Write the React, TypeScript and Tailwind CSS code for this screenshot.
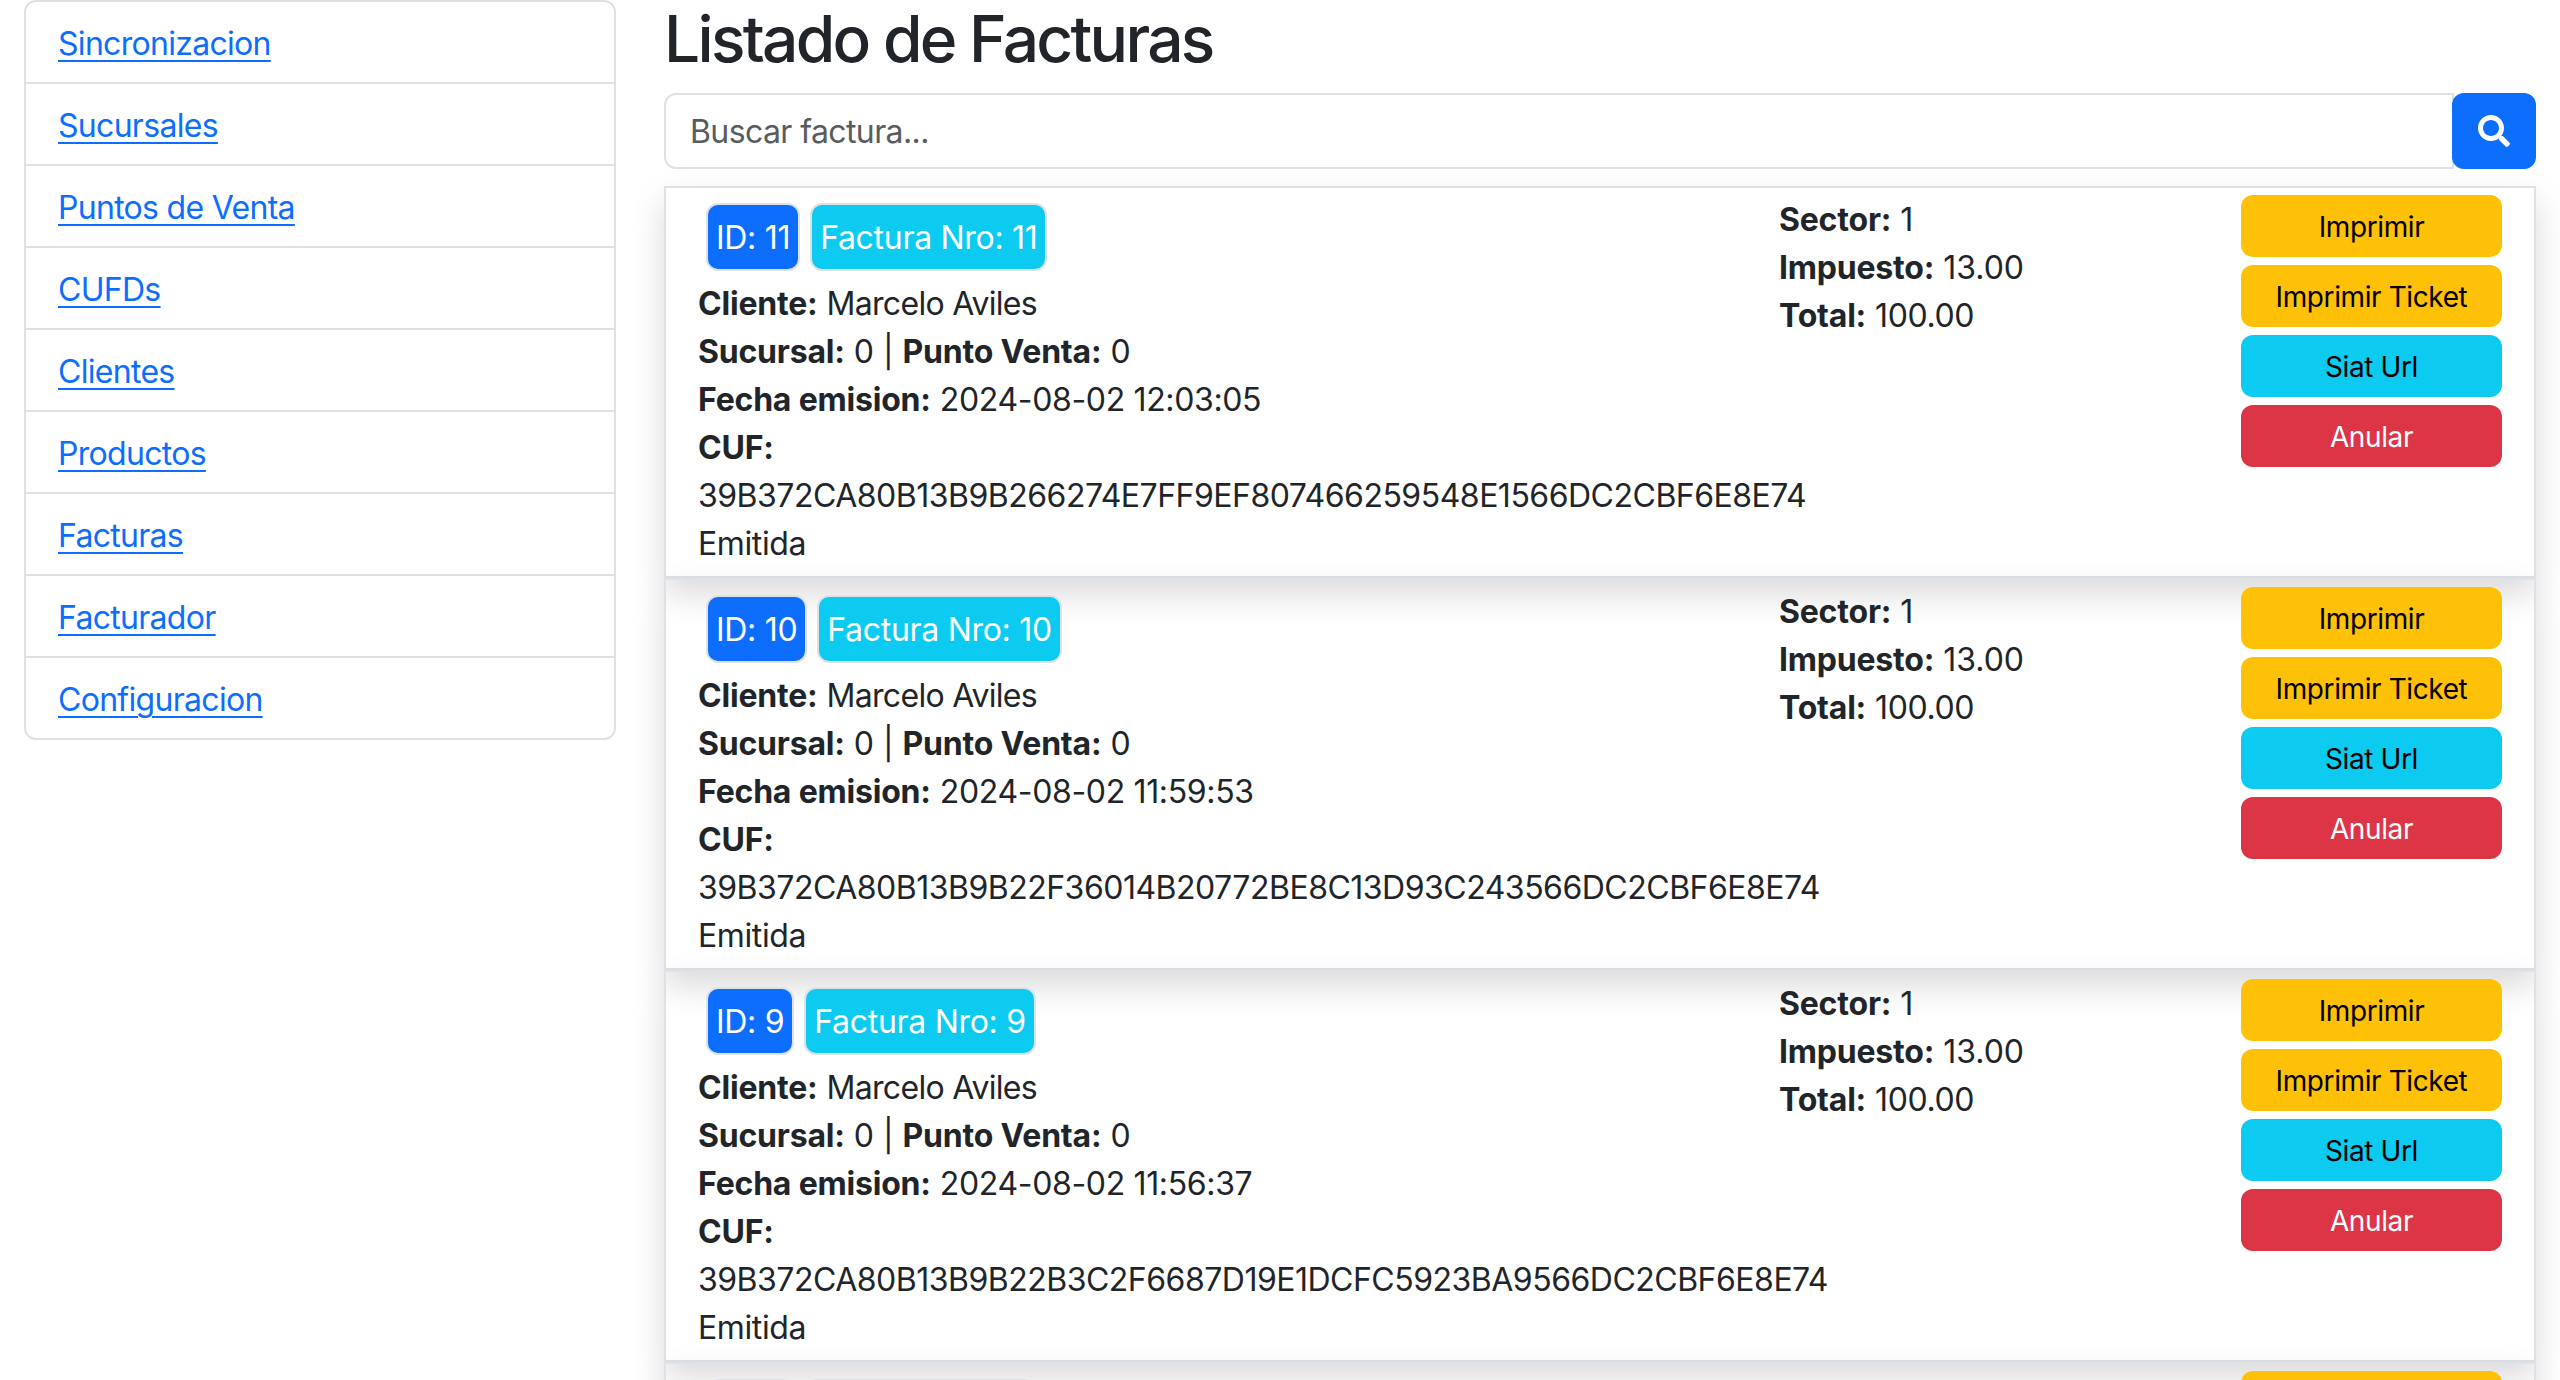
import { FaSearch } from "react-icons/fa"

const links = [
  "Sincronizacion",
  "Sucursales",
  "Puntos de Venta",
  "CUFDs",
  "Clientes",
  "Productos",
  "Facturas",
  "Facturador",
  "Configuracion",
]

const facturas = [
  { id: 11, fecha: "2024-08-02 12:03:05", cuf: "39B372CA80B13B9B266274E7FF9EF807466259548E1566DC2CBF6E8E74" },
  { id: 10, fecha: "2024-08-02 11:59:53", cuf: "39B372CA80B13B9B22F36014B20772BE8C13D93C243566DC2CBF6E8E74" },
  { id: 9, fecha: "2024-08-02 11:56:37", cuf: "39B372CA80B13B9B22B3C2F6687D19E1DCFC5923BA9566DC2CBF6E8E74" },
  { id: 8, fecha: "2024-08-02 11:50:12", cuf: "39B372CA80B13B9B22B3C2F6687D19E1DCFC5923BA9566DC2CBF6E8E74" },
]

function Label({ text }: { text: string }) {
  return <b className="font-bold tracking-[-0.2px]">{text}</b>
}

function Badge({ text, className }: { text: string; className: string }) {
  return (
    <span className={`inline-block rounded-xl border-2 border-[#dee2e6] px-2 pt-[9px] pb-[7px] tracking-[-0.3px] text-white ${className}`}>
      {text}
    </span>
  )
}

function ActionButton({ text, className }: { text: string; className: string }) {
  return (
    <button className={`h-[62px] w-full rounded-xl pt-[2px] text-[28px] leading-[42px] tracking-[-0.4px] ${className}`}>
      {text}
    </button>
  )
}

function FacturaCard({ id, fecha, cuf }: { id: number; fecha: string; cuf: string }) {
  return (
    <div className="flex h-[392px] shrink-0 border-2 border-[#dee2e6] px-8 pt-[7px] shadow-[0_16px_32px_rgba(0,0,0,0.15)]">
      <div className="w-[1081px] shrink-0">
        <div className="flex gap-[10px] pt-[8px] pl-[8px] pb-[9px]">
          <Badge text={`ID: ${id}`} className="bg-[#0d6efd]" />
          <Badge text={`Factura Nro: ${id}`} className="bg-[#0dcaf0]" />
        </div>
        <p><Label text="Cliente:" /> <span className="tracking-[-0.7px]">Marcelo Aviles</span></p>
        <p><Label text="Sucursal:" /> 0 | <Label text="Punto Venta:" /> 0</p>
        <p><Label text="Fecha emision:" /> <span className="tracking-[-0.35px]">{fecha}</span></p>
        <p><Label text="CUF:" /></p>
        <p className="whitespace-nowrap tracking-[-0.5px]">{cuf}</p>
        <p className="tracking-[-0.4px]">Emitida</p>
      </div>
      <div className="w-[462px] shrink-0 pt-[1px]">
        <p><Label text="Sector:" /> 1</p>
        <p><Label text="Impuesto:" /> 13.00</p>
        <p><Label text="Total:" /> <span className="tracking-[-0.4px]">100.00</span></p>
      </div>
      <div className="flex w-[261px] shrink-0 flex-col gap-2">
        <ActionButton text="Imprimir" className="bg-[#ffc107] text-black" />
        <ActionButton text="Imprimir Ticket" className="bg-[#ffc107] text-black" />
        <ActionButton text="Siat Url" className="bg-[#0dcaf0] text-black" />
        <ActionButton text="Anular" className="bg-[#dc3545] text-white" />
      </div>
    </div>
  )
}

export default function App() {
  return (
    <div className="flex h-[1380px] gap-[48px] overflow-hidden bg-white px-6 font-['Inter',sans-serif] text-[32px] leading-[48px] text-[#212529]">
      <nav className="h-[740px] w-[592px] shrink-0 overflow-hidden rounded-xl border-2 border-[#dee2e6]">
        {links.map((link) => (
          <div key={link} className="h-[82px] border-b-2 border-[#dee2e6] px-8 pt-[18px] last:border-b-0">
            <a href="#" className="tracking-[-0.7px] text-[#0d6efd] underline decoration-2 underline-offset-[5px]">{link}</a>
          </div>
        ))}
      </nav>
      <main className="min-w-0 flex-1">
        <h2 className="h-[93px] text-[64px] leading-[77px] font-medium tracking-[-2.7px]">Listado de Facturas</h2>
        <div className="flex h-[76px]">
          <input
            placeholder="Buscar factura..."
            className="min-w-0 flex-1 rounded-l-xl border-2 border-[#dee2e6] px-6 pt-[2px] tracking-[-0.6px] outline-none placeholder:text-[#595c5f]"
          />
          <button className="relative -ml-[2px] flex w-[84px] items-center justify-center rounded-xl bg-[#0d6efd] text-white">
            <FaSearch size={32} />
          </button>
        </div>
        <div className="mt-[17px] flex flex-col">
          {facturas.map((f) => (
            <FacturaCard key={f.id} {...f} />
          ))}
        </div>
      </main>
    </div>
  )
}
